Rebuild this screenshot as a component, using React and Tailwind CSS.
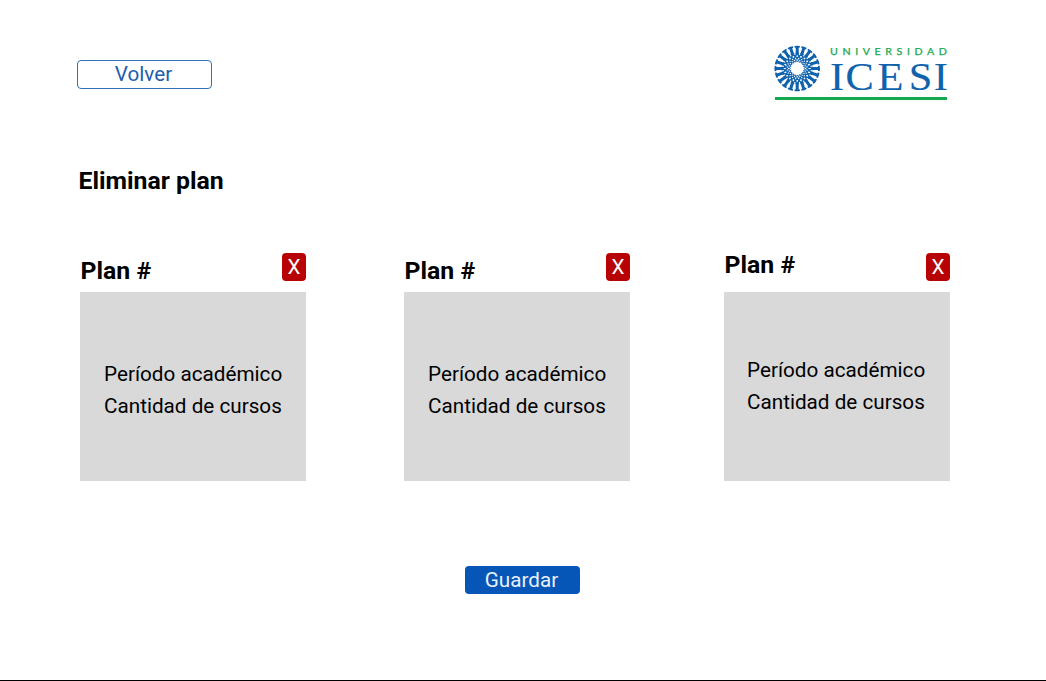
const SPOKES = Array.from({ length: 20 }, (_, i) => i * 18);

function Logo() {
  return (
    <svg width="176" height="58" viewBox="773 44 176 58" className="block" role="img" aria-label="Universidad Icesi">
      <g transform="translate(797.2 68.5)" fill="none" stroke="#0f62ac">
        {SPOKES.map((a) => (
          <g key={a} transform={`rotate(${a})`}>
            <path d="M-2.6 -21.6Q0 -22.2 2.6 -21.6" strokeWidth="1.8" />
            <path d="M0 -22V-15" strokeWidth="3" />
            <path d="M-1.8 -15H1.8" strokeWidth="1.6" />
            <path d="M0 -15L-1.9 -12.2L0 -10L1.9 -12.2Z" strokeWidth="1.4" />
            <path d="M0 -10.3L-1.3 -8.4L0 -6.6L1.3 -8.4Z" strokeWidth="0.9" />
          </g>
        ))}
      </g>
      <text x="830" y="55.2" textLength="121.5" lengthAdjust="spacingAndGlyphs" fill="#18a951" stroke="#18a951" strokeWidth="0.25" className="font-['Lato',sans-serif] text-[9.3px] tracking-[4px]">UNIVERSIDAD</text>
      <text transform="translate(830 89.5) scale(1.06 1)" x="0 14.6 44.8 74.2 97.8" y="0" fill="#0f62ac" stroke="#0f62ac" strokeWidth="0.15" className="font-['Liberation_Serif',serif] text-[40px]">ICESI</text>
      <rect x="775" y="97" width="172" height="3" fill="#12a94f" />
    </svg>
  );
}

function PlanCard({ raised = false }) {
  return (
    <article className="w-[226px]">
      <header className="flex h-[39px] items-start justify-between">
        <h2 className={`pl-[0.5px] text-[24.8px] leading-[28px] font-bold ${raised ? "-mt-[2px]" : "mt-[4px]"}`}>Plan #</h2>
        <button className="h-[28px] w-[24px] rounded-[4px] bg-[#b70303] text-[20.7px] leading-[28px] text-white">X</button>
      </header>
      <div className={`h-[189px] bg-[#d9d9d9] text-[20.7px] leading-[32px] whitespace-nowrap ${raised ? "pt-[62px] pl-[23px]" : "pt-[66px] pl-[24px]"}`}>
        <p>Período académico</p>
        <p>Cantidad de cursos</p>
      </div>
    </article>
  );
}

export default function App() {
  return (
    <main className="flex h-[681px] w-[1046px] flex-col overflow-hidden border-b border-black bg-white font-['Roboto',sans-serif] text-black">
      <header className="flex h-[102px] shrink-0 items-start justify-between pr-[97px] pl-[77px]">
        <button className="mt-[60px] h-[29px] w-[135px] rounded-[4px] border border-[#3070b8] text-[20.7px] leading-[27px] text-[#1d5eb0]"><span className="mr-[2px]">Volver</span></button>
        <div className="pt-[44px]"><Logo /></div>
      </header>
      <h1 className="mt-[65px] pl-[78.5px] text-[24.8px] leading-[28px] font-bold">Eliminar plan</h1>
      <section className="mt-[58px] flex pl-[80px]">
        <PlanCard />
        <div className="ml-[98px]"><PlanCard /></div>
        <div className="ml-[94px]"><PlanCard raised /></div>
      </section>
      <button className="mt-[85px] ml-[465px] h-[28px] w-[115px] rounded-[4px] bg-[#0656b7] text-[20.7px] leading-[28px] text-[#e9f1fc]"><span className="mr-[2px]">Guardar</span></button>
    </main>
  );
}
